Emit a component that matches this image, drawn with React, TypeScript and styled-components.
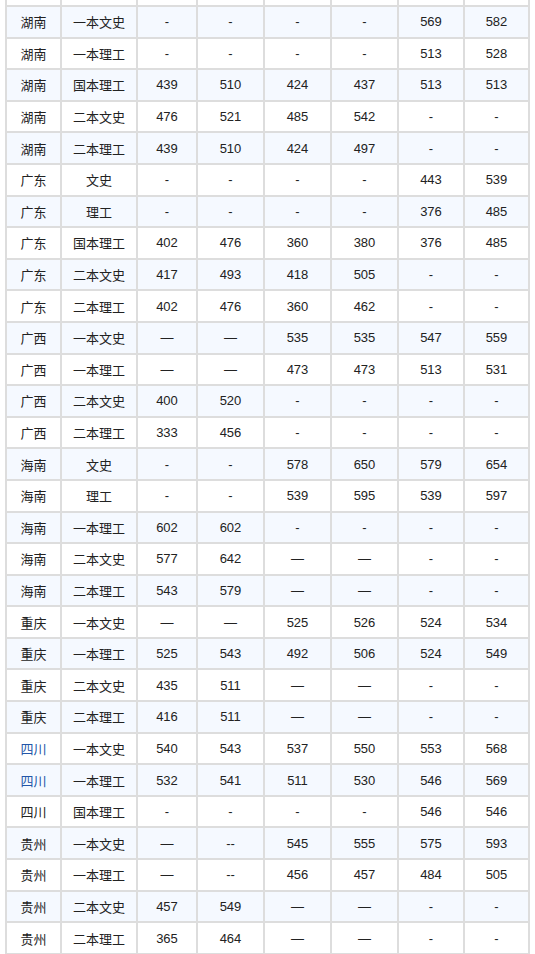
import React from "react";
import styled, { createGlobalStyle } from "styled-components";

const Global = createGlobalStyle`
  html, body { margin: 0; padding: 0; background: #ffffff; overflow: hidden; }
  body { font-family: "Liberation Sans", Arial, "Noto Sans CJK SC", sans-serif; }
`;

const Page = styled.div`
  padding-left: 5px;
  margin-top: -26.6px;
`;

const Table = styled.table`
  border-collapse: separate;
  border-spacing: 2px;
  background: #dddddd;
  table-layout: fixed;
  width: 525px;
  font-size: 13px;
  color: #222222;
`;

const Row = styled.tr<{ $alt: boolean }>`
  background: ${(p) => (p.$alt ? "#f5f9ff" : "#ffffff")};
`;

const Cell = styled.td<{ $link?: boolean }>`
  height: 29.6px;
  padding: 0;
  box-sizing: border-box;
  text-align: center;
  vertical-align: middle;
  white-space: nowrap;
  color: ${(p) => (p.$link ? "#2356a8" : "#222222")};
`;

type R = [string, string, string, string, string, string, string, string, boolean?];

const rows: R[] = [
  ["", "", "", "", "", "", "", ""],
  ["湖南", "一本文史", "-", "-", "-", "-", "569", "582"],
  ["湖南", "一本理工", "-", "-", "-", "-", "513", "528"],
  ["湖南", "国本理工", "439", "510", "424", "437", "513", "513"],
  ["湖南", "二本文史", "476", "521", "485", "542", "-", "-"],
  ["湖南", "二本理工", "439", "510", "424", "497", "-", "-"],
  ["广东", "文史", "-", "-", "-", "-", "443", "539"],
  ["广东", "理工", "-", "-", "-", "-", "376", "485"],
  ["广东", "国本理工", "402", "476", "360", "380", "376", "485"],
  ["广东", "二本文史", "417", "493", "418", "505", "-", "-"],
  ["广东", "二本理工", "402", "476", "360", "462", "-", "-"],
  ["广西", "一本文史", "—", "—", "535", "535", "547", "559"],
  ["广西", "一本理工", "—", "—", "473", "473", "513", "531"],
  ["广西", "二本文史", "400", "520", "-", "-", "-", "-"],
  ["广西", "二本理工", "333", "456", "-", "-", "-", "-"],
  ["海南", "文史", "-", "-", "578", "650", "579", "654"],
  ["海南", "理工", "-", "-", "539", "595", "539", "597"],
  ["海南", "一本理工", "602", "602", "-", "-", "-", "-"],
  ["海南", "二本文史", "577", "642", "—", "—", "-", "-"],
  ["海南", "二本理工", "543", "579", "—", "—", "-", "-"],
  ["重庆", "一本文史", "—", "—", "525", "526", "524", "534"],
  ["重庆", "一本理工", "525", "543", "492", "506", "524", "549"],
  ["重庆", "二本文史", "435", "511", "—", "—", "-", "-"],
  ["重庆", "二本理工", "416", "511", "—", "—", "-", "-"],
  ["四川", "一本文史", "540", "543", "537", "550", "553", "568", true],
  ["四川", "一本理工", "532", "541", "511", "530", "546", "569", true],
  ["四川", "国本理工", "-", "-", "-", "-", "546", "546"],
  ["贵州", "一本文史", "—", "--", "545", "555", "575", "593"],
  ["贵州", "一本理工", "—", "--", "456", "457", "484", "505"],
  ["贵州", "二本文史", "457", "549", "—", "—", "-", "-"],
  ["贵州", "二本理工", "365", "464", "—", "—", "-", "-"],
];

const widths = [53, 74, 58, 65, 65, 65, 64, 63];

export default function App() {
  return (
    <>
      <Global />
      <Page>
        <Table>
          <colgroup>
            {widths.map((w, i) => (
              <col key={i} style={{ width: w }} />
            ))}
          </colgroup>
          <tbody>
            {rows.map((r, i) => (
              <Row key={i} $alt={i % 2 === 1}>
                <Cell $link={r[8]}>{r[0]}</Cell>
                {r.slice(1, 8).map((v, j) => (
                  <Cell key={j}>{v as string}</Cell>
                ))}
              </Row>
            ))}
          </tbody>
        </Table>
      </Page>
    </>
  );
}
